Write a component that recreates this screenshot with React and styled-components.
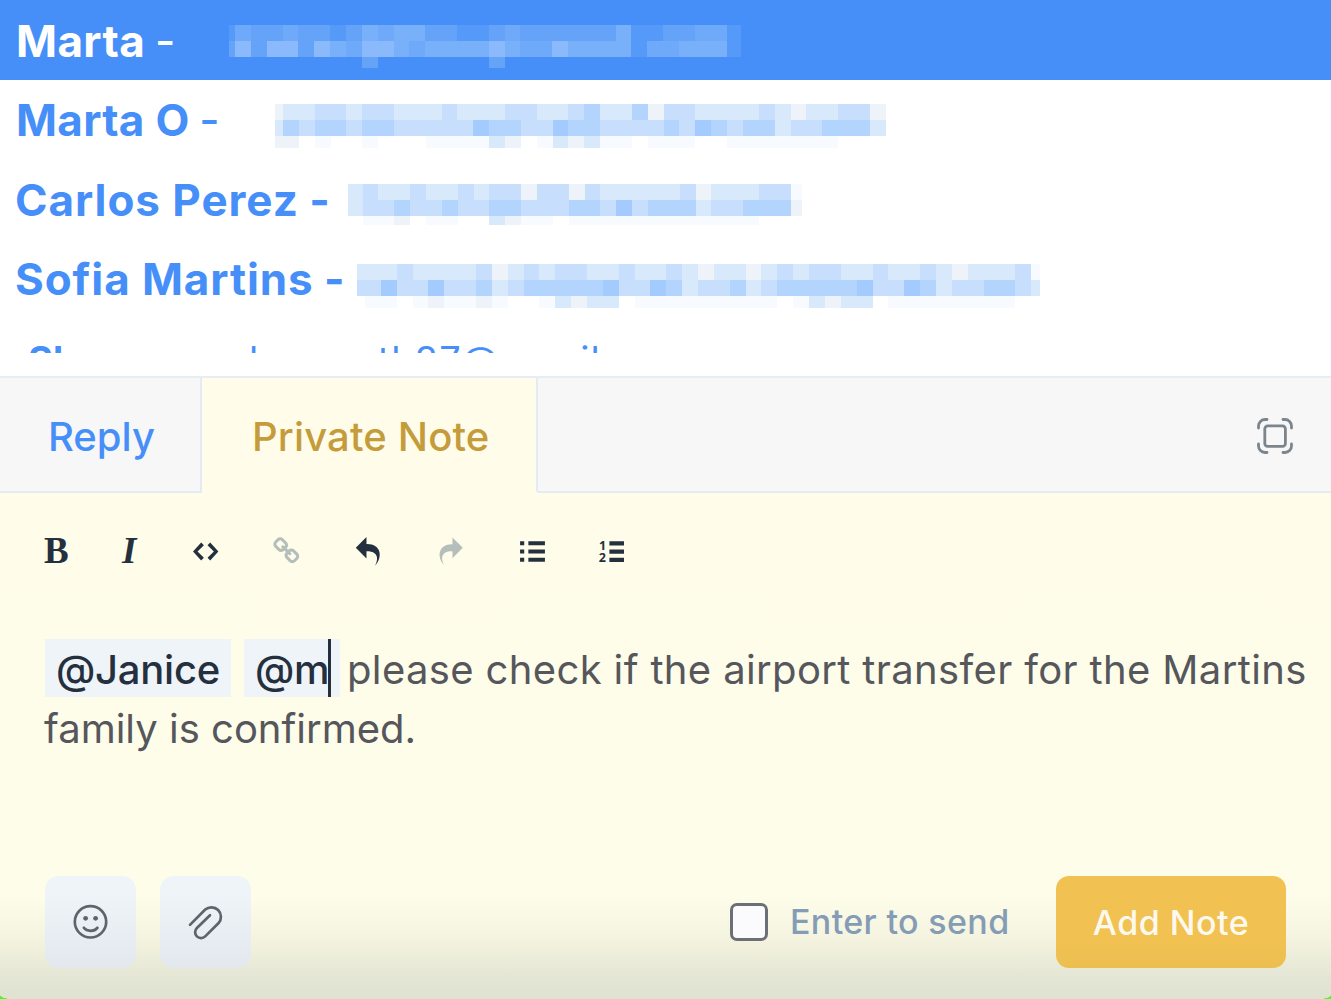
import React, { Component } from 'react'
import styled, { createGlobalStyle } from 'styled-components'

var GlobalStyle = createGlobalStyle`
    *{
        box-sizing:border-box;
    }
    body{
        margin:0;
        background-color:#45fb28;
        font-family:Inter, 'Liberation Sans', sans-serif;
        font-feature-settings:'calt' 0;
        overflow:hidden;
    }
`

var Page = styled.div`
    width:1331px;
    height:999px;
    display:flex;
    flex-direction:column;
    overflow:hidden;
    background-color:#fff;
    border-radius:0 0 12px 12px / 0 0 5px 5px;
`

var Suggestions = styled.div`
    height:353px;
    overflow:hidden;
    flex:none;
`

var SuggestionRow = styled.div`
    display:flex;
    height:${props => props.$active ? '80px' : '79.4px'};
    padding-left:16px;
    background-color:${props => props.$active ? '#478ff8' : '#fff'};
    color:${props => props.$active ? '#fff' : '#478ff8'};
`

var Name = styled.div`
    width:${props => props.$width};
    flex:none;
    padding-top:${props => props.$top};
    font-size:44px;
    line-height:54px;
    font-weight:700;
    letter-spacing:${props => props.$spacing};
    text-indent:${props => props.$indent || '0'};
    white-space:pre;
`

var Dash = styled.span`
    margin-left:-1px;
    font-weight:${props => props.$light ? 500 : 700};
    letter-spacing:0;
`

var Mosaic = styled.div`
    display:grid;
    align-content:start;
    grid-template-rows:16px 16px ${props => props.$tail};
    padding-top:${props => props.$top};
`

var MosaicLine = styled.div`
    display:flex;
`

var whiteTones = ['transparent', '#f7fafe', '#edf3f9', '#d9e9fc', '#c7defd', '#b3d4fd', '#a3cbfd']
var blueTones = ['transparent', '#559af9', '#65a3f9', '#6fa9fa', '#79b0fa', '#8abafb']

var Cell = styled.span`
    width:${props => props.$width};
    flex:none;
    background-color:${props => (props.$active ? blueTones : whiteTones)[props.$tone]};
`

var CutRow = styled.div`
    display:flex;
    padding-left:28px;
    padding-top:19px;
    font-size:38px;
    line-height:46px;
    color:#478ff8;
`

var CutName = styled.b`
    width:221px;
    flex:none;
`

var CutMail = styled.span`
    letter-spacing:${props => props.$spacing};
`

var Editor = styled.div`
    flex:1;
    margin-top:23px;
    display:flex;
    flex-direction:column;
    background:linear-gradient(#fffdea 0, #fefde9 520px, #f5f4e0 560px, #e5e6d5 600px, #dfe2d0 623px);
`

var Tabs = styled.div`
    display:flex;
    height:117px;
    flex:none;
    border-top:2px solid #e6edf4;
`

var Tab = styled.div`
    width:${props => props.$width};
    height:115px;
    flex:none;
    padding-left:${props => props.$left};
    padding-top:35px;
    font-size:40px;
    line-height:48px;
    font-weight:${props => props.$selected ? 500 : 450};
    letter-spacing:${props => props.$spacing};
    white-space:nowrap;
    color:${props => props.$selected ? '#c59c3c' : '#478ff8'};
    background-color:${props => props.$selected ? '#fffdea' : '#f7f7f8'};
    border-right:2px solid #e3ebf5;
    border-bottom:2px solid ${props => props.$selected ? '#fffdea' : '#e3ebf5'};
`

var TabFill = styled.div`
    flex:1;
    display:flex;
    align-items:center;
    justify-content:flex-end;
    padding-top:2px;
    padding-right:38px;
    background-color:#f7f7f8;
    border-bottom:2px solid #e3ebf5;
`

var Toolbar = styled.div`
    display:grid;
    grid-template-columns:78px 71px 80px 80.5px 83.5px 83px 79px 60px;
    grid-template-rows:48px;
    align-items:center;
    height:48px;
    flex:none;
    margin-top:34px;
    padding-left:44px;
    color:#25303f;
    & > svg{
        display:block;
        overflow:visible;
    }
`

var Letter = styled.span`
    font-family:'Liberation Serif', serif;
    font-size:37px;
    line-height:48px;
    font-weight:700;
    font-style:${props => props.$italic ? 'italic' : 'normal'};
`

var Message = styled.div`
    height:237px;
    flex:none;
    margin-top:64px;
    padding-left:45px;
    font-size:40px;
    white-space:nowrap;
    color:#55575c;
`

var Line = styled.div`
    display:flex;
    height:59.5px;
    line-height:${props => props.$leading};
    text-indent:${props => props.$indent || '0'};
    letter-spacing:${props => props.$spacing};
`

var Mention = styled.span`
    position:relative;
    width:${props => props.$width};
    height:58px;
    flex:none;
    padding-left:11px;
    margin-right:${props => props.$gap};
    font-weight:500;
    letter-spacing:-.25px;
    color:#25303f;
    background-color:#eff4f9;
`

var Caret = styled.i`
    position:absolute;
    top:0;
    left:84px;
    width:3px;
    height:58px;
    background-color:#25303f;
`

var Footer = styled.div`
    display:flex;
    align-items:center;
    height:92px;
    padding:0 45px;
`

var IconButton = styled.div`
    width:91px;
    height:92px;
    margin-right:24px;
    border-radius:14px;
    background:linear-gradient(#eff4f9 20%, #e3e8ee);
    & > svg{
        display:block;
    }
`

var Checkbox = styled.span`
    width:38px;
    height:38px;
    margin-left:auto;
    margin-right:22px;
    border:3px solid #6b6f76;
    border-radius:7px;
    background-color:#fbfbfe;
`

var CheckLabel = styled.span`
    width:266px;
    font-size:34px;
    line-height:40px;
    font-weight:500;
    letter-spacing:.35px;
    white-space:nowrap;
    color:#849cb5;
`

var AddButton = styled.div`
    width:230px;
    height:92px;
    padding-top:1px;
    border-radius:13px;
    background:linear-gradient(#f1c252 70%, #ecbe50);
    color:#fdf9ee;
    font-size:34px;
    line-height:92px;
    font-weight:500;
    letter-spacing:.5px;
    text-align:center;
    white-space:nowrap;
`

// every line is one row of blocks, a digit is the tone of a block
var people = [
    {
        name: 'Marta',
        light: true,
        active: true,
        width: '213px',
        nameTop: '14px',
        spacing: '.4px',
        first: '6px',
        last: '14px',
        top: '25px',
        tail: '11px',
        lines: [
            '132232212434422112322222241122331',
            '252552543554344445433544441334441',
            '000000000200000002000000000000000'
        ]
    },
    {
        name: 'Marta O',
        light: true,
        width: '259px',
        nameTop: '13px',
        spacing: '.3px',
        first: '8px',
        last: '16px',
        top: '24px',
        tail: '12px',
        lines: [
            '233443443334333443345335244333343233442',
            '354554554444465544655444454654553445553',
            '220100100011113201323110111001111111000'
        ]
    },
    {
        name: 'Carlos Perez',
        width: '332px',
        nameTop: '14px',
        spacing: '.95px',
        indent: '-1px',
        first: '14.5px',
        last: '11px',
        top: '24.6px',
        tail: '9px',
        lines: [
            '34334334344244243333342333441',
            '34454454455444554645553445552',
            '01120110032110111111111111000'
        ]
    },
    {
        name: 'Sofia Martins',
        width: '341px',
        nameTop: '13px',
        spacing: '.9px',
        indent: '-1px',
        first: '8px',
        last: '9px',
        top: '25.4px',
        tail: '12px',
        lines: [
            '33343333423434433433432332343443343343233341',
            '44644644534555556446534453455555644653445543',
            '01101211210013233011111111101323301111111100'
        ]
    }
]

class Redacted extends Component {
    cellWidth(i, count) {
        var person = this.props.person
        if (i === 0) return person.first
        if (i === count - 1) return person.last
        return '15.86px'
    }

    render() {
        var person = this.props.person
        return (
            <Mosaic $top={person.top} $tail={person.tail}>
                {person.lines.map((line, row) => (
                    <MosaicLine key={row}>
                        {line.split('').map((tone, i) => (
                            <Cell key={i} $tone={tone} $active={person.active} $width={this.cellWidth(i, line.length)} />
                        ))}
                    </MosaicLine>
                ))}
            </Mosaic>
        )
    }
}

class MentionList extends Component {
    render() {
        return (
            <Suggestions>
                {people.map(person => (
                    <SuggestionRow key={person.name} $active={person.active}>
                        <Name $width={person.width} $top={person.nameTop} $spacing={person.spacing} $indent={person.indent}>
                            {person.name} <Dash $light={person.light}>-</Dash>
                        </Name>
                        <Redacted person={person} />
                    </SuggestionRow>
                ))}
                <CutRow>
                    <CutName>Shannon</CutName>
                    <CutMail $spacing="3.9px">kenne</CutMail>
                    <CutMail $spacing="1px">th87@gmail</CutMail>
                </CutRow>
            </Suggestions>
        )
    }
}

class EditorTabs extends Component {
    render() {
        return (
            <Tabs>
                <Tab $width="202px" $left="48px" $spacing="0px">Reply</Tab>
                <Tab $selected $width="336px" $left="50px" $spacing="0.15px">Private Note</Tab>
                <TabFill>
                    <svg width="36" height="36" viewBox="0 0 36 36" fill="none" stroke="#7b858d" strokeWidth="2.8" strokeLinecap="round">
                        <rect x="7.8" y="7.8" width="20.6" height="20.6" rx="3" />
                        <path d="M1.5 10V8a6.5 6.5 0 0 1 6.5-6.5h2M26 1.5h2A6.5 6.5 0 0 1 34.5 8v2M34.5 26v2a6.5 6.5 0 0 1-6.5 6.5h-2M10 34.5H8A6.5 6.5 0 0 1 1.5 28v-2" />
                    </svg>
                </TabFill>
            </Tabs>
        )
    }
}

class EditorToolbar extends Component {
    render() {
        return (
            <Toolbar>
                <Letter>B</Letter>
                <Letter $italic>I</Letter>
                <svg width="25.4" height="29" viewBox="0 0 896 1024" fill="currentColor">
                    <path d="M608 192l-96 96 224 224-224 224 96 96 288-320-288-320zM288 192l-288 320 288 320 96-96-224-224 224-224-96-96z" />
                </svg>
                <svg width="26.5" height="28.5" viewBox="0 0 951 1024" fill="#b4bfbb">
                    <path d="M832 694q0-22-16-38l-118-118q-16-16-38-16-24 0-41 18 1 1 10 10t12 12 8 10 7 14 2 15q0 22-16 38t-38 16q-8 0-15-2t-14-7-10-8-12-12-10-10q-18 17-18 41 0 22 16 38l117 118q15 15 38 15 22 0 38-14l84-83q16-16 16-38zM430 292q0-22-16-38l-117-118q-16-16-38-16-22 0-38 15l-84 83q-16 16-16 37 0 22 16 38l118 118q15 15 38 15 24 0 41-17-1-1-10-10t-12-12-8-10-7-14-2-15q0-22 16-38t38-16q8 0 15 2t14 7 10 8 12 12 10 10q18-17 18-41zM941 694q0 68-48 116l-84 83q-47 47-116 47-69 0-116-48l-117-118q-47-47-47-116 0-70 50-119l-50-50q-49 50-118 50-68 0-116-48l-118-118q-48-48-48-116t48-116l84-83q47-47 116-47 69 0 116 48l117 118q47 47 47 116 0 70-50 119l50 50q49-50 118-50 68 0 116 48l118 118q48 48 48 116z" />
                </svg>
                <svg width="28.5" height="28.5" viewBox="0 0 1024 1024" fill="currentColor">
                    <path d="M761 1024c113-206 132-520-313-509v253l-384-384 384-384v248c534-13 594 472 313 775z" />
                </svg>
                <svg width="27.5" height="28.5" viewBox="0 0 1024 1024" fill="#b4bfbb">
                    <path d="M576 248v-248l384 384-384 384v-253c-446-10-427 303-313 509-280-303-221-789 313-775z" />
                </svg>
                <svg width="25" height="29" viewBox="0 0 768 896" fill="currentColor">
                    <path d="M0 512h128v-128h-128v128zM0 256h128v-128h-128v128zM0 768h128v-128h-128v128zM256 512h512v-128h-512v128zM256 256h512v-128h-512v128zM256 768h512v-128h-512v128z" />
                </svg>
                <svg width="25" height="29" viewBox="0 0 25 29" fill="currentColor" fontFamily="Open Sans, sans-serif" fontSize="12.5" fontWeight="700">
                    <path d="M10.4 4.2H25v4.2H10.4zM10.4 12.5H25v4.2H10.4zM10.4 20.8H25v4.2H10.4z" />
                    <text x="0" y="12.5">1</text>
                    <text x="-.3" y="25.3">2</text>
                </svg>
            </Toolbar>
        )
    }
}

class EditorFooter extends Component {
    render() {
        return (
            <Footer>
                <IconButton>
                    <svg width="92" height="92" viewBox="0 0 92 92" fill="none" stroke="#5d646b" strokeWidth="2.7" strokeLinecap="round">
                        <circle cx="45.5" cy="45.8" r="15.7" />
                        <path d="M38.8 51.8c3 4 10.5 4 13.6 0" />
                        <circle cx="40.6" cy="42.3" r="2.4" fill="#5d646b" stroke="none" />
                        <circle cx="50.6" cy="42.3" r="2.4" fill="#5d646b" stroke="none" />
                    </svg>
                </IconButton>
                <IconButton>
                    <svg width="92" height="92" viewBox="0 0 92 92" fill="none" stroke="#5d646b" strokeWidth="2.7" strokeLinecap="round">
                        <path d="M30 48.900L45.200 33.600A9.500 9.500 0 0 1 58.600 47L45.200 60.400A5.900 5.900 0 0 1 36.900 52L50 39.200" />
                    </svg>
                </IconButton>
                <Checkbox />
                <CheckLabel>Enter to send</CheckLabel>
                <AddButton>Add Note</AddButton>
            </Footer>
        )
    }
}

class App extends Component {
    render() {
        return (
            <Page>
                <GlobalStyle />
                <MentionList />
                <Editor>
                    <EditorTabs />
                    <EditorToolbar />
                    <Message>
                        <Line $leading="62px" $spacing="0.36px">
                            <Mention $width="186px" $gap="13px">@Janice</Mention>
                            <Mention $width="96px" $gap="7px">@m<Caret /></Mention>
                            please check if the airport transfer for the Martins
                        </Line>
                        <Line $leading="60px" $indent="-1px" $spacing="0px">family is confirmed.</Line>
                    </Message>
                    <EditorFooter />
                </Editor>
            </Page>
        )
    }
}

export default App
